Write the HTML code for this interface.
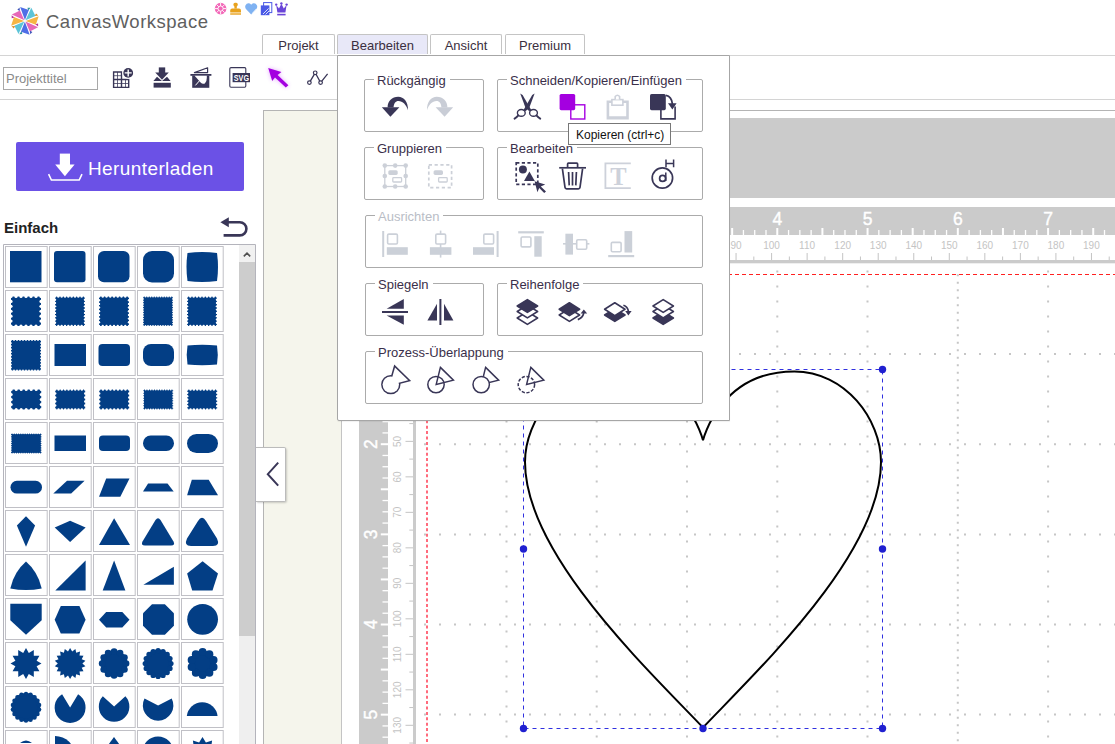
<!DOCTYPE html>
<html><head><meta charset="utf-8">
<style>
html,body{margin:0;padding:0;width:1115px;height:744px;overflow:hidden;background:#fff;font-family:"Liberation Sans",sans-serif;}
.a{position:absolute;}
.hl{position:absolute;height:1px;background:#d4d4d4;}
.tab{position:absolute;top:34px;height:20px;border:1px solid #c4c4c4;border-bottom:none;border-radius:2px 2px 0 0;background:#fff;font-size:13px;color:#3b2f40;text-align:center;line-height:22px;box-sizing:border-box;}
svg{position:absolute;overflow:visible;}
.grp{position:absolute;box-sizing:border-box;border:1px solid #ababab;border-radius:2px;}
.grp span{position:absolute;left:9px;top:-7px;padding:0 4px 0 3px;background:#fff;font-size:13px;line-height:16px;color:#3a2f4a;white-space:nowrap;}
</style></head><body>

<!-- header -->
<svg style="left:0;top:0" width="1115" height="110" viewBox="0 0 1115 110">
<!-- logo pinwheel -->
<g><polygon points="24.91,20.10 20.15,7.10 28.87,10.00" fill="#4f6ee6"/><polygon points="19.51,7.55 17.41,9.79 19.91,11.10" fill="#3a50b8"/><polygon points="25.48,20.34 31.30,7.78 35.41,16.00" fill="#5cc4d8"/><polygon points="30.53,7.64 27.46,7.75 28.30,10.44" fill="#2f95a0"/><polygon points="25.70,20.91 38.70,16.15 35.80,24.87" fill="#f6b544"/><polygon points="38.25,15.51 36.01,13.41 34.70,15.91" fill="#d88c22"/><polygon points="25.46,21.48 38.02,27.30 29.80,31.41" fill="#e667b8"/><polygon points="38.16,26.53 38.05,23.46 35.36,24.30" fill="#b8309c"/><polygon points="24.89,21.70 29.65,34.70 20.93,31.80" fill="#4f6ee6"/><polygon points="30.29,34.25 32.39,32.01 29.89,30.70" fill="#3a50b8"/><polygon points="24.32,21.46 18.50,34.02 14.39,25.80" fill="#5cc4d8"/><polygon points="19.27,34.16 22.34,34.05 21.50,31.36" fill="#2f95a0"/><polygon points="24.10,20.89 11.10,25.65 14.00,16.93" fill="#f6b544"/><polygon points="11.55,26.29 13.79,28.39 15.10,25.89" fill="#d88c22"/><polygon points="24.34,20.32 11.78,14.50 20.00,10.39" fill="#e667b8"/><polygon points="11.64,15.27 11.75,18.34 14.44,17.50" fill="#b8309c"/></g>
<!-- header badges -->
<g fill="#f268b8">
<circle cx="220.6" cy="8.6" r="5.8"/>
</g>
<g fill="none" stroke="#fff" stroke-width="0.9">
<circle cx="220.6" cy="8.6" r="2.6"/>
<path d="M220.6 2.8 V6 M220.6 11.2 V14.4 M214.8 8.6 H218 M223.2 8.6 H226.4 M216.5 4.5 L218.8 6.8 M222.4 10.4 L224.7 12.7 M224.7 4.5 L222.4 6.8 M218.8 10.4 L216.5 12.7"/>
</g>
<g fill="#e8a21d">
<rect x="233.4" y="2.8" width="4.4" height="3.6" rx="1.6"/>
<rect x="234.4" y="6" width="2.4" height="2.6"/>
<path d="M230.2 12.4 V10.4 Q230.2 8.4 232.2 8.4 H239 Q241 8.4 241 10.4 V12.4 Z"/>
<rect x="230.2" y="13.3" width="10.8" height="1.4"/>
</g>
<path d="M251.2 14.6 L246.4 9.6 Q244.6 7.6 245.4 5.4 Q246.6 2.9 249 3.2 Q250.4 3.5 251.2 4.8 Q252 3.5 253.4 3.2 Q255.8 2.9 257 5.4 Q257.8 7.6 256 9.6 Z" fill="#7fb2f2"/>
<path d="M252.2 13.4 L256.4 8.8" stroke="#fff" stroke-width="0.7"/>
<g>
<rect x="263.6" y="2.6" width="8.2" height="10" fill="none" stroke="#4a5ae6" stroke-width="1"/>
<rect x="260.8" y="5.4" width="8.6" height="9.8" fill="#4a5ae6"/>
<path d="M263 14 L268.6 8.4 M265.6 14.4 L269 11" stroke="#fff" stroke-width="0.8"/>
</g>
<g fill="#6a45d8">
<polygon points="276.2,5 279,8.6 281.4,3.8 283.8,8.6 286.6,5 285.4,12.6 277.4,12.6"/>
<circle cx="276.2" cy="4.6" r="1.2"/><circle cx="281.4" cy="3.4" r="1.2"/><circle cx="286.6" cy="4.6" r="1.2"/>
<rect x="277.2" y="13.8" width="8.4" height="1.6"/>
</g>
<!-- toolbar icons -->
<g fill="none" stroke="#393657">
<path d="M113.6 72 H121.5 V79.5 H128.7 V87.4 H113.6 Z M121.5 79.5 V87.4 M113.6 79.5 H121.5" stroke-width="1.4"/>
<path d="M117.5 72 V87.4 M125.5 79.5 V87.4 M113.6 75.7 H121.5 M113.6 83.5 H128.7" stroke-width="0.9" opacity="0.85"/>
</g>
<circle cx="128.2" cy="72.9" r="5.8" fill="#fff"/>
<circle cx="128.2" cy="72.9" r="4.9" fill="#393657"/>
<path d="M128.2 69.4 V76.4 M124.7 72.9 H131.7" stroke="#fff" stroke-width="1.4"/>
<g fill="#393657">
<rect x="158.8" y="67.4" width="6.4" height="5.6"/>
<polygon points="155.2,72.6 168.8,72.6 162,79.8"/>
<polygon points="153.4,81 157,76.8 162,81 167,76.8 170.6,81"/>
<rect x="153.6" y="82.8" width="17.2" height="4.8"/>
<rect x="190.4" y="74" width="21" height="1.8"/>
<rect x="192.2" y="75.6" width="17.1" height="12.2"/>
</g>
<path d="M194.6 75.8 L200.6 82.4 Q202.6 84.6 204.8 83.4 Q206.8 82 206.8 78 V75.8 Z" fill="#fff"/>
<path d="M195.4 85.4 L199.8 80.4" stroke="#fff" stroke-width="1"/>
<path d="M194.4 72.6 L207.6 67.8 V72.6 Z" fill="none" stroke="#393657" stroke-width="1.2" stroke-linejoin="round"/>
<rect x="229.8" y="67.6" width="16" height="19.6" rx="1.2" fill="none" stroke="#393657" stroke-width="1.1"/>
<rect x="232.6" y="73" width="17.4" height="9.2" fill="#393657"/>
<text x="233.8" y="80.9" font-family="Liberation Sans" font-weight="bold" font-size="8.4" textLength="15.2" lengthAdjust="spacingAndGlyphs" fill="#fff">SVG</text>
<defs><filter id="gl" x="-50%" y="-50%" width="200%" height="200%"><feGaussianBlur stdDeviation="2.2"/></filter></defs>
<g filter="url(#gl)" opacity="0.45"><polygon points="268.2,68 281.4,72 277.6,75 288.4,85.2 285.8,87.6 275,77.4 272.2,81" fill="#c040ff"/></g>
<polygon points="268.2,68 281.4,72 277.6,75 288.4,85.2 285.8,87.6 275,77.4 272.2,81" fill="#a400e0"/>
<path d="M309.4 82.6 L315.2 72.8 L320.6 82.6 L327.6 73.8" fill="none" stroke="#393657" stroke-width="1.3"/>
<g fill="#fff" stroke="#393657" stroke-width="1.2">
<circle cx="309.4" cy="82.6" r="1.8"/><circle cx="315.2" cy="72.8" r="1.8"/><circle cx="320.6" cy="82.6" r="1.8"/>
</g>
</svg>

<div class="a" id="logotxt" style="left:46px;top:10.5px;font-size:18.5px;letter-spacing:0.5px;color:#606060;white-space:nowrap;">CanvasWorkspace</div>

<div class="tab" style="left:262px;width:73px;">Projekt</div>
<div class="tab" style="left:337px;width:91px;background:#e8e8f8;">Bearbeiten</div>
<div class="tab" style="left:430px;width:72px;">Ansicht</div>
<div class="tab" style="left:505px;width:80px;">Premium</div>
<div class="hl" style="left:0;top:55px;width:1115px;"></div>

<!-- toolbar -->
<div class="a" style="left:3px;top:67px;width:95px;height:23px;border:1px solid #a8a8a8;box-sizing:border-box;font-size:13px;color:#8a8a8a;line-height:21px;padding-left:2px;">Projekttitel</div>
<div class="hl" style="left:0;top:99px;width:1115px;"></div>

<!-- left panel -->
<div class="a" style="left:16px;top:142px;width:228px;height:49px;background:#6b51e6;border-radius:2px;"></div>
<div class="a" style="left:88px;top:158px;font-size:19px;letter-spacing:0.4px;color:#fff;white-space:nowrap;">Herunterladen</div>
<div class="a" style="left:4px;top:219px;font-size:15px;font-weight:bold;color:#222;">Einfach</div>

<svg style="left:0;top:0" width="260" height="744" viewBox="0 0 260 744"><g fill="none" stroke="#c0c0c6" stroke-width="1"><rect x="5.5" y="246.5" width="41.7" height="41"/><rect x="49.5" y="246.5" width="41.7" height="41"/><rect x="93.5" y="246.5" width="41.7" height="41"/><rect x="137.5" y="246.5" width="41.7" height="41"/><rect x="181.5" y="246.5" width="41.7" height="41"/><rect x="5.5" y="290.5" width="41.7" height="41"/><rect x="49.5" y="290.5" width="41.7" height="41"/><rect x="93.5" y="290.5" width="41.7" height="41"/><rect x="137.5" y="290.5" width="41.7" height="41"/><rect x="181.5" y="290.5" width="41.7" height="41"/><rect x="5.5" y="334.5" width="41.7" height="41"/><rect x="49.5" y="334.5" width="41.7" height="41"/><rect x="93.5" y="334.5" width="41.7" height="41"/><rect x="137.5" y="334.5" width="41.7" height="41"/><rect x="181.5" y="334.5" width="41.7" height="41"/><rect x="5.5" y="378.5" width="41.7" height="41"/><rect x="49.5" y="378.5" width="41.7" height="41"/><rect x="93.5" y="378.5" width="41.7" height="41"/><rect x="137.5" y="378.5" width="41.7" height="41"/><rect x="181.5" y="378.5" width="41.7" height="41"/><rect x="5.5" y="422.5" width="41.7" height="41"/><rect x="49.5" y="422.5" width="41.7" height="41"/><rect x="93.5" y="422.5" width="41.7" height="41"/><rect x="137.5" y="422.5" width="41.7" height="41"/><rect x="181.5" y="422.5" width="41.7" height="41"/><rect x="5.5" y="466.5" width="41.7" height="41"/><rect x="49.5" y="466.5" width="41.7" height="41"/><rect x="93.5" y="466.5" width="41.7" height="41"/><rect x="137.5" y="466.5" width="41.7" height="41"/><rect x="181.5" y="466.5" width="41.7" height="41"/><rect x="5.5" y="510.5" width="41.7" height="41"/><rect x="49.5" y="510.5" width="41.7" height="41"/><rect x="93.5" y="510.5" width="41.7" height="41"/><rect x="137.5" y="510.5" width="41.7" height="41"/><rect x="181.5" y="510.5" width="41.7" height="41"/><rect x="5.5" y="554.5" width="41.7" height="41"/><rect x="49.5" y="554.5" width="41.7" height="41"/><rect x="93.5" y="554.5" width="41.7" height="41"/><rect x="137.5" y="554.5" width="41.7" height="41"/><rect x="181.5" y="554.5" width="41.7" height="41"/><rect x="5.5" y="598.5" width="41.7" height="41"/><rect x="49.5" y="598.5" width="41.7" height="41"/><rect x="93.5" y="598.5" width="41.7" height="41"/><rect x="137.5" y="598.5" width="41.7" height="41"/><rect x="181.5" y="598.5" width="41.7" height="41"/><rect x="5.5" y="642.5" width="41.7" height="41"/><rect x="49.5" y="642.5" width="41.7" height="41"/><rect x="93.5" y="642.5" width="41.7" height="41"/><rect x="137.5" y="642.5" width="41.7" height="41"/><rect x="181.5" y="642.5" width="41.7" height="41"/><rect x="5.5" y="686.5" width="41.7" height="41"/><rect x="49.5" y="686.5" width="41.7" height="41"/><rect x="93.5" y="686.5" width="41.7" height="41"/><rect x="137.5" y="686.5" width="41.7" height="41"/><rect x="181.5" y="686.5" width="41.7" height="41"/><rect x="5.5" y="730.5" width="41.7" height="41"/><rect x="49.5" y="730.5" width="41.7" height="41"/><rect x="93.5" y="730.5" width="41.7" height="41"/><rect x="137.5" y="730.5" width="41.7" height="41"/><rect x="181.5" y="730.5" width="41.7" height="41"/></g><g fill="#033e85"><rect x="10.0" y="251.0" width="31.5" height="31.3" rx="0.0"/><rect x="54.0" y="251.0" width="31.5" height="31.3" rx="3.0"/><rect x="98.0" y="251.0" width="31.5" height="31.3" rx="6.0"/><rect x="143.0" y="251.0" width="31.0" height="31.5" rx="9.0"/><path d="M187.5 253.0Q202.2 251.0 217.0 253.0Q219.0 267.0 217.0 281.0Q202.2 283.0 187.5 281.0Q185.5 267.0 187.5 253.0Z"/><rect x="11.0" y="296.5" width="30.0" height="29.5" rx="0.0"/><circle cx="11.00" cy="296.50" r="1.60" fill="#fff"/><circle cx="11.00" cy="326.00" r="1.60" fill="#fff"/><circle cx="16.00" cy="296.50" r="1.60" fill="#fff"/><circle cx="16.00" cy="326.00" r="1.60" fill="#fff"/><circle cx="21.00" cy="296.50" r="1.60" fill="#fff"/><circle cx="21.00" cy="326.00" r="1.60" fill="#fff"/><circle cx="26.00" cy="296.50" r="1.60" fill="#fff"/><circle cx="26.00" cy="326.00" r="1.60" fill="#fff"/><circle cx="31.00" cy="296.50" r="1.60" fill="#fff"/><circle cx="31.00" cy="326.00" r="1.60" fill="#fff"/><circle cx="36.00" cy="296.50" r="1.60" fill="#fff"/><circle cx="36.00" cy="326.00" r="1.60" fill="#fff"/><circle cx="41.00" cy="296.50" r="1.60" fill="#fff"/><circle cx="41.00" cy="326.00" r="1.60" fill="#fff"/><circle cx="11.00" cy="301.42" r="1.60" fill="#fff"/><circle cx="41.00" cy="301.42" r="1.60" fill="#fff"/><circle cx="11.00" cy="306.33" r="1.60" fill="#fff"/><circle cx="41.00" cy="306.33" r="1.60" fill="#fff"/><circle cx="11.00" cy="311.25" r="1.60" fill="#fff"/><circle cx="41.00" cy="311.25" r="1.60" fill="#fff"/><circle cx="11.00" cy="316.17" r="1.60" fill="#fff"/><circle cx="41.00" cy="316.17" r="1.60" fill="#fff"/><circle cx="11.00" cy="321.08" r="1.60" fill="#fff"/><circle cx="41.00" cy="321.08" r="1.60" fill="#fff"/><rect x="55.0" y="296.5" width="30.0" height="29.5" rx="0.0"/><circle cx="55.00" cy="296.50" r="1.20" fill="#fff"/><circle cx="55.00" cy="326.00" r="1.20" fill="#fff"/><circle cx="58.33" cy="296.50" r="1.20" fill="#fff"/><circle cx="58.33" cy="326.00" r="1.20" fill="#fff"/><circle cx="61.67" cy="296.50" r="1.20" fill="#fff"/><circle cx="61.67" cy="326.00" r="1.20" fill="#fff"/><circle cx="65.00" cy="296.50" r="1.20" fill="#fff"/><circle cx="65.00" cy="326.00" r="1.20" fill="#fff"/><circle cx="68.33" cy="296.50" r="1.20" fill="#fff"/><circle cx="68.33" cy="326.00" r="1.20" fill="#fff"/><circle cx="71.67" cy="296.50" r="1.20" fill="#fff"/><circle cx="71.67" cy="326.00" r="1.20" fill="#fff"/><circle cx="75.00" cy="296.50" r="1.20" fill="#fff"/><circle cx="75.00" cy="326.00" r="1.20" fill="#fff"/><circle cx="78.33" cy="296.50" r="1.20" fill="#fff"/><circle cx="78.33" cy="326.00" r="1.20" fill="#fff"/><circle cx="81.67" cy="296.50" r="1.20" fill="#fff"/><circle cx="81.67" cy="326.00" r="1.20" fill="#fff"/><circle cx="85.00" cy="296.50" r="1.20" fill="#fff"/><circle cx="85.00" cy="326.00" r="1.20" fill="#fff"/><circle cx="55.00" cy="299.78" r="1.20" fill="#fff"/><circle cx="85.00" cy="299.78" r="1.20" fill="#fff"/><circle cx="55.00" cy="303.06" r="1.20" fill="#fff"/><circle cx="85.00" cy="303.06" r="1.20" fill="#fff"/><circle cx="55.00" cy="306.33" r="1.20" fill="#fff"/><circle cx="85.00" cy="306.33" r="1.20" fill="#fff"/><circle cx="55.00" cy="309.61" r="1.20" fill="#fff"/><circle cx="85.00" cy="309.61" r="1.20" fill="#fff"/><circle cx="55.00" cy="312.89" r="1.20" fill="#fff"/><circle cx="85.00" cy="312.89" r="1.20" fill="#fff"/><circle cx="55.00" cy="316.17" r="1.20" fill="#fff"/><circle cx="85.00" cy="316.17" r="1.20" fill="#fff"/><circle cx="55.00" cy="319.44" r="1.20" fill="#fff"/><circle cx="85.00" cy="319.44" r="1.20" fill="#fff"/><circle cx="55.00" cy="322.72" r="1.20" fill="#fff"/><circle cx="85.00" cy="322.72" r="1.20" fill="#fff"/><rect x="99.0" y="296.5" width="30.0" height="29.5" rx="0.0"/><circle cx="99.00" cy="296.50" r="1.20" fill="#fff"/><circle cx="99.00" cy="326.00" r="1.20" fill="#fff"/><circle cx="102.75" cy="296.50" r="1.20" fill="#fff"/><circle cx="102.75" cy="326.00" r="1.20" fill="#fff"/><circle cx="106.50" cy="296.50" r="1.20" fill="#fff"/><circle cx="106.50" cy="326.00" r="1.20" fill="#fff"/><circle cx="110.25" cy="296.50" r="1.20" fill="#fff"/><circle cx="110.25" cy="326.00" r="1.20" fill="#fff"/><circle cx="114.00" cy="296.50" r="1.20" fill="#fff"/><circle cx="114.00" cy="326.00" r="1.20" fill="#fff"/><circle cx="117.75" cy="296.50" r="1.20" fill="#fff"/><circle cx="117.75" cy="326.00" r="1.20" fill="#fff"/><circle cx="121.50" cy="296.50" r="1.20" fill="#fff"/><circle cx="121.50" cy="326.00" r="1.20" fill="#fff"/><circle cx="125.25" cy="296.50" r="1.20" fill="#fff"/><circle cx="125.25" cy="326.00" r="1.20" fill="#fff"/><circle cx="129.00" cy="296.50" r="1.20" fill="#fff"/><circle cx="129.00" cy="326.00" r="1.20" fill="#fff"/><circle cx="99.00" cy="300.19" r="1.20" fill="#fff"/><circle cx="129.00" cy="300.19" r="1.20" fill="#fff"/><circle cx="99.00" cy="303.88" r="1.20" fill="#fff"/><circle cx="129.00" cy="303.88" r="1.20" fill="#fff"/><circle cx="99.00" cy="307.56" r="1.20" fill="#fff"/><circle cx="129.00" cy="307.56" r="1.20" fill="#fff"/><circle cx="99.00" cy="311.25" r="1.20" fill="#fff"/><circle cx="129.00" cy="311.25" r="1.20" fill="#fff"/><circle cx="99.00" cy="314.94" r="1.20" fill="#fff"/><circle cx="129.00" cy="314.94" r="1.20" fill="#fff"/><circle cx="99.00" cy="318.62" r="1.20" fill="#fff"/><circle cx="129.00" cy="318.62" r="1.20" fill="#fff"/><circle cx="99.00" cy="322.31" r="1.20" fill="#fff"/><circle cx="129.00" cy="322.31" r="1.20" fill="#fff"/><rect x="143.0" y="296.5" width="30.0" height="29.5" rx="0.0"/><circle cx="143.00" cy="296.50" r="0.90" fill="#fff"/><circle cx="143.00" cy="326.00" r="0.90" fill="#fff"/><circle cx="145.50" cy="296.50" r="0.90" fill="#fff"/><circle cx="145.50" cy="326.00" r="0.90" fill="#fff"/><circle cx="148.00" cy="296.50" r="0.90" fill="#fff"/><circle cx="148.00" cy="326.00" r="0.90" fill="#fff"/><circle cx="150.50" cy="296.50" r="0.90" fill="#fff"/><circle cx="150.50" cy="326.00" r="0.90" fill="#fff"/><circle cx="153.00" cy="296.50" r="0.90" fill="#fff"/><circle cx="153.00" cy="326.00" r="0.90" fill="#fff"/><circle cx="155.50" cy="296.50" r="0.90" fill="#fff"/><circle cx="155.50" cy="326.00" r="0.90" fill="#fff"/><circle cx="158.00" cy="296.50" r="0.90" fill="#fff"/><circle cx="158.00" cy="326.00" r="0.90" fill="#fff"/><circle cx="160.50" cy="296.50" r="0.90" fill="#fff"/><circle cx="160.50" cy="326.00" r="0.90" fill="#fff"/><circle cx="163.00" cy="296.50" r="0.90" fill="#fff"/><circle cx="163.00" cy="326.00" r="0.90" fill="#fff"/><circle cx="165.50" cy="296.50" r="0.90" fill="#fff"/><circle cx="165.50" cy="326.00" r="0.90" fill="#fff"/><circle cx="168.00" cy="296.50" r="0.90" fill="#fff"/><circle cx="168.00" cy="326.00" r="0.90" fill="#fff"/><circle cx="170.50" cy="296.50" r="0.90" fill="#fff"/><circle cx="170.50" cy="326.00" r="0.90" fill="#fff"/><circle cx="173.00" cy="296.50" r="0.90" fill="#fff"/><circle cx="173.00" cy="326.00" r="0.90" fill="#fff"/><circle cx="143.00" cy="298.96" r="0.90" fill="#fff"/><circle cx="173.00" cy="298.96" r="0.90" fill="#fff"/><circle cx="143.00" cy="301.42" r="0.90" fill="#fff"/><circle cx="173.00" cy="301.42" r="0.90" fill="#fff"/><circle cx="143.00" cy="303.88" r="0.90" fill="#fff"/><circle cx="173.00" cy="303.88" r="0.90" fill="#fff"/><circle cx="143.00" cy="306.33" r="0.90" fill="#fff"/><circle cx="173.00" cy="306.33" r="0.90" fill="#fff"/><circle cx="143.00" cy="308.79" r="0.90" fill="#fff"/><circle cx="173.00" cy="308.79" r="0.90" fill="#fff"/><circle cx="143.00" cy="311.25" r="0.90" fill="#fff"/><circle cx="173.00" cy="311.25" r="0.90" fill="#fff"/><circle cx="143.00" cy="313.71" r="0.90" fill="#fff"/><circle cx="173.00" cy="313.71" r="0.90" fill="#fff"/><circle cx="143.00" cy="316.17" r="0.90" fill="#fff"/><circle cx="173.00" cy="316.17" r="0.90" fill="#fff"/><circle cx="143.00" cy="318.62" r="0.90" fill="#fff"/><circle cx="173.00" cy="318.62" r="0.90" fill="#fff"/><circle cx="143.00" cy="321.08" r="0.90" fill="#fff"/><circle cx="173.00" cy="321.08" r="0.90" fill="#fff"/><circle cx="143.00" cy="323.54" r="0.90" fill="#fff"/><circle cx="173.00" cy="323.54" r="0.90" fill="#fff"/><rect x="187.0" y="296.5" width="30.0" height="29.5" rx="0.0"/><circle cx="187.00" cy="296.50" r="1.20" fill="#fff"/><circle cx="187.00" cy="326.00" r="1.20" fill="#fff"/><circle cx="190.33" cy="296.50" r="1.20" fill="#fff"/><circle cx="190.33" cy="326.00" r="1.20" fill="#fff"/><circle cx="193.67" cy="296.50" r="1.20" fill="#fff"/><circle cx="193.67" cy="326.00" r="1.20" fill="#fff"/><circle cx="197.00" cy="296.50" r="1.20" fill="#fff"/><circle cx="197.00" cy="326.00" r="1.20" fill="#fff"/><circle cx="200.33" cy="296.50" r="1.20" fill="#fff"/><circle cx="200.33" cy="326.00" r="1.20" fill="#fff"/><circle cx="203.67" cy="296.50" r="1.20" fill="#fff"/><circle cx="203.67" cy="326.00" r="1.20" fill="#fff"/><circle cx="207.00" cy="296.50" r="1.20" fill="#fff"/><circle cx="207.00" cy="326.00" r="1.20" fill="#fff"/><circle cx="210.33" cy="296.50" r="1.20" fill="#fff"/><circle cx="210.33" cy="326.00" r="1.20" fill="#fff"/><circle cx="213.67" cy="296.50" r="1.20" fill="#fff"/><circle cx="213.67" cy="326.00" r="1.20" fill="#fff"/><circle cx="217.00" cy="296.50" r="1.20" fill="#fff"/><circle cx="217.00" cy="326.00" r="1.20" fill="#fff"/><circle cx="187.00" cy="299.78" r="1.20" fill="#fff"/><circle cx="217.00" cy="299.78" r="1.20" fill="#fff"/><circle cx="187.00" cy="303.06" r="1.20" fill="#fff"/><circle cx="217.00" cy="303.06" r="1.20" fill="#fff"/><circle cx="187.00" cy="306.33" r="1.20" fill="#fff"/><circle cx="217.00" cy="306.33" r="1.20" fill="#fff"/><circle cx="187.00" cy="309.61" r="1.20" fill="#fff"/><circle cx="217.00" cy="309.61" r="1.20" fill="#fff"/><circle cx="187.00" cy="312.89" r="1.20" fill="#fff"/><circle cx="217.00" cy="312.89" r="1.20" fill="#fff"/><circle cx="187.00" cy="316.17" r="1.20" fill="#fff"/><circle cx="217.00" cy="316.17" r="1.20" fill="#fff"/><circle cx="187.00" cy="319.44" r="1.20" fill="#fff"/><circle cx="217.00" cy="319.44" r="1.20" fill="#fff"/><circle cx="187.00" cy="322.72" r="1.20" fill="#fff"/><circle cx="217.00" cy="322.72" r="1.20" fill="#fff"/><rect x="11.0" y="340.0" width="30.0" height="30.5" rx="0.0"/><circle cx="11.00" cy="340.00" r="0.90" fill="#fff"/><circle cx="11.00" cy="370.50" r="0.90" fill="#fff"/><circle cx="14.00" cy="340.00" r="0.90" fill="#fff"/><circle cx="14.00" cy="370.50" r="0.90" fill="#fff"/><circle cx="17.00" cy="340.00" r="0.90" fill="#fff"/><circle cx="17.00" cy="370.50" r="0.90" fill="#fff"/><circle cx="20.00" cy="340.00" r="0.90" fill="#fff"/><circle cx="20.00" cy="370.50" r="0.90" fill="#fff"/><circle cx="23.00" cy="340.00" r="0.90" fill="#fff"/><circle cx="23.00" cy="370.50" r="0.90" fill="#fff"/><circle cx="26.00" cy="340.00" r="0.90" fill="#fff"/><circle cx="26.00" cy="370.50" r="0.90" fill="#fff"/><circle cx="29.00" cy="340.00" r="0.90" fill="#fff"/><circle cx="29.00" cy="370.50" r="0.90" fill="#fff"/><circle cx="32.00" cy="340.00" r="0.90" fill="#fff"/><circle cx="32.00" cy="370.50" r="0.90" fill="#fff"/><circle cx="35.00" cy="340.00" r="0.90" fill="#fff"/><circle cx="35.00" cy="370.50" r="0.90" fill="#fff"/><circle cx="38.00" cy="340.00" r="0.90" fill="#fff"/><circle cx="38.00" cy="370.50" r="0.90" fill="#fff"/><circle cx="41.00" cy="340.00" r="0.90" fill="#fff"/><circle cx="41.00" cy="370.50" r="0.90" fill="#fff"/><circle cx="11.00" cy="343.05" r="0.90" fill="#fff"/><circle cx="41.00" cy="343.05" r="0.90" fill="#fff"/><circle cx="11.00" cy="346.10" r="0.90" fill="#fff"/><circle cx="41.00" cy="346.10" r="0.90" fill="#fff"/><circle cx="11.00" cy="349.15" r="0.90" fill="#fff"/><circle cx="41.00" cy="349.15" r="0.90" fill="#fff"/><circle cx="11.00" cy="352.20" r="0.90" fill="#fff"/><circle cx="41.00" cy="352.20" r="0.90" fill="#fff"/><circle cx="11.00" cy="355.25" r="0.90" fill="#fff"/><circle cx="41.00" cy="355.25" r="0.90" fill="#fff"/><circle cx="11.00" cy="358.30" r="0.90" fill="#fff"/><circle cx="41.00" cy="358.30" r="0.90" fill="#fff"/><circle cx="11.00" cy="361.35" r="0.90" fill="#fff"/><circle cx="41.00" cy="361.35" r="0.90" fill="#fff"/><circle cx="11.00" cy="364.40" r="0.90" fill="#fff"/><circle cx="41.00" cy="364.40" r="0.90" fill="#fff"/><circle cx="11.00" cy="367.45" r="0.90" fill="#fff"/><circle cx="41.00" cy="367.45" r="0.90" fill="#fff"/><rect x="54.5" y="344.0" width="31.5" height="22.0" rx="0.0"/><rect x="98.5" y="344.0" width="31.5" height="22.0" rx="4.0"/><rect x="143.0" y="344.0" width="31.0" height="22.0" rx="8.0"/><path d="M187.5 345.5Q202.2 343.9 217.0 345.5Q218.6 355.0 217.0 364.5Q202.2 366.1 187.5 364.5Q185.9 355.0 187.5 345.5Z"/><rect x="11.2" y="389.5" width="30.0" height="20.0" rx="0.0"/><circle cx="11.20" cy="389.50" r="1.50" fill="#fff"/><circle cx="11.20" cy="409.50" r="1.50" fill="#fff"/><circle cx="16.20" cy="389.50" r="1.50" fill="#fff"/><circle cx="16.20" cy="409.50" r="1.50" fill="#fff"/><circle cx="21.20" cy="389.50" r="1.50" fill="#fff"/><circle cx="21.20" cy="409.50" r="1.50" fill="#fff"/><circle cx="26.20" cy="389.50" r="1.50" fill="#fff"/><circle cx="26.20" cy="409.50" r="1.50" fill="#fff"/><circle cx="31.20" cy="389.50" r="1.50" fill="#fff"/><circle cx="31.20" cy="409.50" r="1.50" fill="#fff"/><circle cx="36.20" cy="389.50" r="1.50" fill="#fff"/><circle cx="36.20" cy="409.50" r="1.50" fill="#fff"/><circle cx="41.20" cy="389.50" r="1.50" fill="#fff"/><circle cx="41.20" cy="409.50" r="1.50" fill="#fff"/><circle cx="11.20" cy="394.50" r="1.50" fill="#fff"/><circle cx="41.20" cy="394.50" r="1.50" fill="#fff"/><circle cx="11.20" cy="399.50" r="1.50" fill="#fff"/><circle cx="41.20" cy="399.50" r="1.50" fill="#fff"/><circle cx="11.20" cy="404.50" r="1.50" fill="#fff"/><circle cx="41.20" cy="404.50" r="1.50" fill="#fff"/><rect x="55.2" y="389.5" width="30.0" height="20.0" rx="0.0"/><circle cx="55.20" cy="389.50" r="1.20" fill="#fff"/><circle cx="55.20" cy="409.50" r="1.20" fill="#fff"/><circle cx="58.53" cy="389.50" r="1.20" fill="#fff"/><circle cx="58.53" cy="409.50" r="1.20" fill="#fff"/><circle cx="61.87" cy="389.50" r="1.20" fill="#fff"/><circle cx="61.87" cy="409.50" r="1.20" fill="#fff"/><circle cx="65.20" cy="389.50" r="1.20" fill="#fff"/><circle cx="65.20" cy="409.50" r="1.20" fill="#fff"/><circle cx="68.53" cy="389.50" r="1.20" fill="#fff"/><circle cx="68.53" cy="409.50" r="1.20" fill="#fff"/><circle cx="71.87" cy="389.50" r="1.20" fill="#fff"/><circle cx="71.87" cy="409.50" r="1.20" fill="#fff"/><circle cx="75.20" cy="389.50" r="1.20" fill="#fff"/><circle cx="75.20" cy="409.50" r="1.20" fill="#fff"/><circle cx="78.53" cy="389.50" r="1.20" fill="#fff"/><circle cx="78.53" cy="409.50" r="1.20" fill="#fff"/><circle cx="81.87" cy="389.50" r="1.20" fill="#fff"/><circle cx="81.87" cy="409.50" r="1.20" fill="#fff"/><circle cx="85.20" cy="389.50" r="1.20" fill="#fff"/><circle cx="85.20" cy="409.50" r="1.20" fill="#fff"/><circle cx="55.20" cy="393.50" r="1.20" fill="#fff"/><circle cx="85.20" cy="393.50" r="1.20" fill="#fff"/><circle cx="55.20" cy="397.50" r="1.20" fill="#fff"/><circle cx="85.20" cy="397.50" r="1.20" fill="#fff"/><circle cx="55.20" cy="401.50" r="1.20" fill="#fff"/><circle cx="85.20" cy="401.50" r="1.20" fill="#fff"/><circle cx="55.20" cy="405.50" r="1.20" fill="#fff"/><circle cx="85.20" cy="405.50" r="1.20" fill="#fff"/><rect x="99.2" y="389.5" width="30.0" height="20.0" rx="0.0"/><circle cx="99.20" cy="389.50" r="1.20" fill="#fff"/><circle cx="99.20" cy="409.50" r="1.20" fill="#fff"/><circle cx="102.95" cy="389.50" r="1.20" fill="#fff"/><circle cx="102.95" cy="409.50" r="1.20" fill="#fff"/><circle cx="106.70" cy="389.50" r="1.20" fill="#fff"/><circle cx="106.70" cy="409.50" r="1.20" fill="#fff"/><circle cx="110.45" cy="389.50" r="1.20" fill="#fff"/><circle cx="110.45" cy="409.50" r="1.20" fill="#fff"/><circle cx="114.20" cy="389.50" r="1.20" fill="#fff"/><circle cx="114.20" cy="409.50" r="1.20" fill="#fff"/><circle cx="117.95" cy="389.50" r="1.20" fill="#fff"/><circle cx="117.95" cy="409.50" r="1.20" fill="#fff"/><circle cx="121.70" cy="389.50" r="1.20" fill="#fff"/><circle cx="121.70" cy="409.50" r="1.20" fill="#fff"/><circle cx="125.45" cy="389.50" r="1.20" fill="#fff"/><circle cx="125.45" cy="409.50" r="1.20" fill="#fff"/><circle cx="129.20" cy="389.50" r="1.20" fill="#fff"/><circle cx="129.20" cy="409.50" r="1.20" fill="#fff"/><circle cx="99.20" cy="393.50" r="1.20" fill="#fff"/><circle cx="129.20" cy="393.50" r="1.20" fill="#fff"/><circle cx="99.20" cy="397.50" r="1.20" fill="#fff"/><circle cx="129.20" cy="397.50" r="1.20" fill="#fff"/><circle cx="99.20" cy="401.50" r="1.20" fill="#fff"/><circle cx="129.20" cy="401.50" r="1.20" fill="#fff"/><circle cx="99.20" cy="405.50" r="1.20" fill="#fff"/><circle cx="129.20" cy="405.50" r="1.20" fill="#fff"/><rect x="143.2" y="389.5" width="30.0" height="20.0" rx="0.0"/><circle cx="143.20" cy="389.50" r="0.90" fill="#fff"/><circle cx="143.20" cy="409.50" r="0.90" fill="#fff"/><circle cx="145.70" cy="389.50" r="0.90" fill="#fff"/><circle cx="145.70" cy="409.50" r="0.90" fill="#fff"/><circle cx="148.20" cy="389.50" r="0.90" fill="#fff"/><circle cx="148.20" cy="409.50" r="0.90" fill="#fff"/><circle cx="150.70" cy="389.50" r="0.90" fill="#fff"/><circle cx="150.70" cy="409.50" r="0.90" fill="#fff"/><circle cx="153.20" cy="389.50" r="0.90" fill="#fff"/><circle cx="153.20" cy="409.50" r="0.90" fill="#fff"/><circle cx="155.70" cy="389.50" r="0.90" fill="#fff"/><circle cx="155.70" cy="409.50" r="0.90" fill="#fff"/><circle cx="158.20" cy="389.50" r="0.90" fill="#fff"/><circle cx="158.20" cy="409.50" r="0.90" fill="#fff"/><circle cx="160.70" cy="389.50" r="0.90" fill="#fff"/><circle cx="160.70" cy="409.50" r="0.90" fill="#fff"/><circle cx="163.20" cy="389.50" r="0.90" fill="#fff"/><circle cx="163.20" cy="409.50" r="0.90" fill="#fff"/><circle cx="165.70" cy="389.50" r="0.90" fill="#fff"/><circle cx="165.70" cy="409.50" r="0.90" fill="#fff"/><circle cx="168.20" cy="389.50" r="0.90" fill="#fff"/><circle cx="168.20" cy="409.50" r="0.90" fill="#fff"/><circle cx="170.70" cy="389.50" r="0.90" fill="#fff"/><circle cx="170.70" cy="409.50" r="0.90" fill="#fff"/><circle cx="173.20" cy="389.50" r="0.90" fill="#fff"/><circle cx="173.20" cy="409.50" r="0.90" fill="#fff"/><circle cx="143.20" cy="392.00" r="0.90" fill="#fff"/><circle cx="173.20" cy="392.00" r="0.90" fill="#fff"/><circle cx="143.20" cy="394.50" r="0.90" fill="#fff"/><circle cx="173.20" cy="394.50" r="0.90" fill="#fff"/><circle cx="143.20" cy="397.00" r="0.90" fill="#fff"/><circle cx="173.20" cy="397.00" r="0.90" fill="#fff"/><circle cx="143.20" cy="399.50" r="0.90" fill="#fff"/><circle cx="173.20" cy="399.50" r="0.90" fill="#fff"/><circle cx="143.20" cy="402.00" r="0.90" fill="#fff"/><circle cx="173.20" cy="402.00" r="0.90" fill="#fff"/><circle cx="143.20" cy="404.50" r="0.90" fill="#fff"/><circle cx="173.20" cy="404.50" r="0.90" fill="#fff"/><circle cx="143.20" cy="407.00" r="0.90" fill="#fff"/><circle cx="173.20" cy="407.00" r="0.90" fill="#fff"/><rect x="187.2" y="389.5" width="30.0" height="20.0" rx="0.0"/><circle cx="187.20" cy="389.50" r="1.20" fill="#fff"/><circle cx="187.20" cy="409.50" r="1.20" fill="#fff"/><circle cx="190.53" cy="389.50" r="1.20" fill="#fff"/><circle cx="190.53" cy="409.50" r="1.20" fill="#fff"/><circle cx="193.87" cy="389.50" r="1.20" fill="#fff"/><circle cx="193.87" cy="409.50" r="1.20" fill="#fff"/><circle cx="197.20" cy="389.50" r="1.20" fill="#fff"/><circle cx="197.20" cy="409.50" r="1.20" fill="#fff"/><circle cx="200.53" cy="389.50" r="1.20" fill="#fff"/><circle cx="200.53" cy="409.50" r="1.20" fill="#fff"/><circle cx="203.87" cy="389.50" r="1.20" fill="#fff"/><circle cx="203.87" cy="409.50" r="1.20" fill="#fff"/><circle cx="207.20" cy="389.50" r="1.20" fill="#fff"/><circle cx="207.20" cy="409.50" r="1.20" fill="#fff"/><circle cx="210.53" cy="389.50" r="1.20" fill="#fff"/><circle cx="210.53" cy="409.50" r="1.20" fill="#fff"/><circle cx="213.87" cy="389.50" r="1.20" fill="#fff"/><circle cx="213.87" cy="409.50" r="1.20" fill="#fff"/><circle cx="217.20" cy="389.50" r="1.20" fill="#fff"/><circle cx="217.20" cy="409.50" r="1.20" fill="#fff"/><circle cx="187.20" cy="392.83" r="1.20" fill="#fff"/><circle cx="217.20" cy="392.83" r="1.20" fill="#fff"/><circle cx="187.20" cy="396.17" r="1.20" fill="#fff"/><circle cx="217.20" cy="396.17" r="1.20" fill="#fff"/><circle cx="187.20" cy="399.50" r="1.20" fill="#fff"/><circle cx="217.20" cy="399.50" r="1.20" fill="#fff"/><circle cx="187.20" cy="402.83" r="1.20" fill="#fff"/><circle cx="217.20" cy="402.83" r="1.20" fill="#fff"/><circle cx="187.20" cy="406.17" r="1.20" fill="#fff"/><circle cx="217.20" cy="406.17" r="1.20" fill="#fff"/><rect x="11.0" y="433.5" width="30.5" height="20.0" rx="0.0"/><circle cx="11.00" cy="433.50" r="0.80" fill="#fff"/><circle cx="11.00" cy="453.50" r="0.80" fill="#fff"/><circle cx="13.18" cy="433.50" r="0.80" fill="#fff"/><circle cx="13.18" cy="453.50" r="0.80" fill="#fff"/><circle cx="15.36" cy="433.50" r="0.80" fill="#fff"/><circle cx="15.36" cy="453.50" r="0.80" fill="#fff"/><circle cx="17.54" cy="433.50" r="0.80" fill="#fff"/><circle cx="17.54" cy="453.50" r="0.80" fill="#fff"/><circle cx="19.71" cy="433.50" r="0.80" fill="#fff"/><circle cx="19.71" cy="453.50" r="0.80" fill="#fff"/><circle cx="21.89" cy="433.50" r="0.80" fill="#fff"/><circle cx="21.89" cy="453.50" r="0.80" fill="#fff"/><circle cx="24.07" cy="433.50" r="0.80" fill="#fff"/><circle cx="24.07" cy="453.50" r="0.80" fill="#fff"/><circle cx="26.25" cy="433.50" r="0.80" fill="#fff"/><circle cx="26.25" cy="453.50" r="0.80" fill="#fff"/><circle cx="28.43" cy="433.50" r="0.80" fill="#fff"/><circle cx="28.43" cy="453.50" r="0.80" fill="#fff"/><circle cx="30.61" cy="433.50" r="0.80" fill="#fff"/><circle cx="30.61" cy="453.50" r="0.80" fill="#fff"/><circle cx="32.79" cy="433.50" r="0.80" fill="#fff"/><circle cx="32.79" cy="453.50" r="0.80" fill="#fff"/><circle cx="34.96" cy="433.50" r="0.80" fill="#fff"/><circle cx="34.96" cy="453.50" r="0.80" fill="#fff"/><circle cx="37.14" cy="433.50" r="0.80" fill="#fff"/><circle cx="37.14" cy="453.50" r="0.80" fill="#fff"/><circle cx="39.32" cy="433.50" r="0.80" fill="#fff"/><circle cx="39.32" cy="453.50" r="0.80" fill="#fff"/><circle cx="41.50" cy="433.50" r="0.80" fill="#fff"/><circle cx="41.50" cy="453.50" r="0.80" fill="#fff"/><circle cx="11.00" cy="435.72" r="0.80" fill="#fff"/><circle cx="41.50" cy="435.72" r="0.80" fill="#fff"/><circle cx="11.00" cy="437.94" r="0.80" fill="#fff"/><circle cx="41.50" cy="437.94" r="0.80" fill="#fff"/><circle cx="11.00" cy="440.17" r="0.80" fill="#fff"/><circle cx="41.50" cy="440.17" r="0.80" fill="#fff"/><circle cx="11.00" cy="442.39" r="0.80" fill="#fff"/><circle cx="41.50" cy="442.39" r="0.80" fill="#fff"/><circle cx="11.00" cy="444.61" r="0.80" fill="#fff"/><circle cx="41.50" cy="444.61" r="0.80" fill="#fff"/><circle cx="11.00" cy="446.83" r="0.80" fill="#fff"/><circle cx="41.50" cy="446.83" r="0.80" fill="#fff"/><circle cx="11.00" cy="449.06" r="0.80" fill="#fff"/><circle cx="41.50" cy="449.06" r="0.80" fill="#fff"/><circle cx="11.00" cy="451.28" r="0.80" fill="#fff"/><circle cx="41.50" cy="451.28" r="0.80" fill="#fff"/><rect x="54.5" y="435.5" width="31.5" height="15.5" rx="0.0"/><rect x="99.0" y="435.5" width="31.0" height="15.5" rx="4.0"/><rect x="143.0" y="435.5" width="31.0" height="15.5" rx="7.7"/><rect x="187.0" y="434.0" width="31.0" height="19.0" rx="9.5"/><rect x="10.5" y="480.8" width="31.5" height="12.8" rx="6.4"/><polygon points="53.3,493.6 71.2,493.6 84.6,480.8 67.0,480.8"/><polygon points="99.0,496.7 120.3,496.7 129.5,478.4 106.2,478.4"/><polygon points="143.0,491.6 173.7,491.6 167.5,483.5 148.1,483.5"/><polygon points="187.1,495.3 218.0,495.3 208.7,479.8 191.8,479.8"/><polygon points="26.0,516.3 35.1,525.5 26.0,546.8 16.9,525.5"/><polygon points="54.7,527.6 70.1,520.8 85.6,527.6 70.1,542.0"/><polygon points="114.1,518.3 130.0,545.1 99.0,545.1"/><path d="M155.5 520.0 Q158.0 516.5 160.5 520.0 L173.5 541.5 Q175.5 545.5 171.0 545.5 L145.0 545.5 Q140.5 545.5 142.5 541.5 Z"/><path d="M198.0 521.0 Q202.0 514.5 206.0 521.0 L217.0 538.5 Q220.5 546.0 213.0 546.0 L191.0 546.0 Q183.5 546.0 187.0 538.5 Z"/><path d="M26.0 561.6 Q38.0 572.0 41.7 588.4 Q26.0 591.5 10.3 588.4 Q14.0 572.0 26.0 561.6 Z"/><polygon points="55.3,590.5 85.6,590.5 85.6,560.6"/><polygon points="114.1,560.6 125.4,590.5 102.7,590.5"/><polygon points="143.4,584.7 173.9,566.8 173.9,584.7"/><polygon points="202.6,561.2 218.0,573.6 212.5,590.5 192.2,590.5 187.1,573.6"/><polygon points="10.3,603.8 41.7,603.8 41.7,620.3 26.0,634.8 10.3,620.3"/><polygon points="54.7,619.7 60.8,605.9 79.4,605.9 85.6,619.7 79.4,633.5 60.8,633.5"/><polygon points="99.0,619.7 106.2,612.1 122.3,612.1 129.5,619.7 122.3,627.4 106.2,627.4"/><polygon points="152.0,604.3 164.9,604.3 173.9,613.3 173.9,625.8 164.9,634.8 152.0,634.8 143.0,625.8 143.0,613.3"/><circle cx="202.6" cy="619.3" r="15.4"/><polygon points="26.0,648.0 28.8,652.9 33.8,650.1 33.8,655.7 39.4,655.8 36.6,660.7 41.5,663.5 36.6,666.3 39.4,671.2 33.8,671.3 33.8,676.9 28.8,674.1 26.0,679.0 23.2,674.1 18.3,676.9 18.2,671.3 12.6,671.2 15.4,666.3 10.5,663.5 15.4,660.7 12.6,655.8 18.2,655.7 18.2,650.1 23.2,652.9"/><polygon points="70.1,648.0 72.2,651.4 75.4,648.9 76.2,652.8 80.1,651.6 79.5,655.6 83.5,655.8 81.7,659.3 85.4,660.8 82.4,663.5 85.4,666.2 81.7,667.7 83.5,671.2 79.5,671.4 80.1,675.4 76.2,674.2 75.4,678.1 72.2,675.6 70.1,679.0 68.0,675.6 64.8,678.1 63.9,674.2 60.1,675.4 60.7,671.4 56.7,671.2 58.5,667.7 54.8,666.2 57.8,663.5 54.8,660.8 58.5,659.3 56.7,655.8 60.7,655.6 60.1,651.6 63.9,652.8 64.8,648.9 68.0,651.4"/><circle cx="114.1" cy="663.5" r="13.3"/><circle cx="114.10" cy="651.50" r="3.30"/><circle cx="120.10" cy="653.11" r="3.30"/><circle cx="124.49" cy="657.50" r="3.30"/><circle cx="126.10" cy="663.50" r="3.30"/><circle cx="124.49" cy="669.50" r="3.30"/><circle cx="120.10" cy="673.89" r="3.30"/><circle cx="114.10" cy="675.50" r="3.30"/><circle cx="108.10" cy="673.89" r="3.30"/><circle cx="103.71" cy="669.50" r="3.30"/><circle cx="102.10" cy="663.50" r="3.30"/><circle cx="103.71" cy="657.50" r="3.30"/><circle cx="108.10" cy="653.11" r="3.30"/><circle cx="158.1" cy="663.5" r="13.9"/><circle cx="158.10" cy="650.60" r="2.60"/><circle cx="163.04" cy="651.58" r="2.60"/><circle cx="167.22" cy="654.38" r="2.60"/><circle cx="170.02" cy="658.56" r="2.60"/><circle cx="171.00" cy="663.50" r="2.60"/><circle cx="170.02" cy="668.44" r="2.60"/><circle cx="167.22" cy="672.62" r="2.60"/><circle cx="163.04" cy="675.42" r="2.60"/><circle cx="158.10" cy="676.40" r="2.60"/><circle cx="153.16" cy="675.42" r="2.60"/><circle cx="148.98" cy="672.62" r="2.60"/><circle cx="146.18" cy="668.44" r="2.60"/><circle cx="145.20" cy="663.50" r="2.60"/><circle cx="146.18" cy="658.56" r="2.60"/><circle cx="148.98" cy="654.38" r="2.60"/><circle cx="153.16" cy="651.58" r="2.60"/><circle cx="202.6" cy="663.5" r="13.1"/><circle cx="202.60" cy="652.00" r="4.00"/><circle cx="209.36" cy="654.20" r="4.00"/><circle cx="213.54" cy="659.95" r="4.00"/><circle cx="213.54" cy="667.05" r="4.00"/><circle cx="209.36" cy="672.80" r="4.00"/><circle cx="202.60" cy="675.00" r="4.00"/><circle cx="195.84" cy="672.80" r="4.00"/><circle cx="191.66" cy="667.05" r="4.00"/><circle cx="191.66" cy="659.95" r="4.00"/><circle cx="195.84" cy="654.20" r="4.00"/><circle cx="26.0" cy="707.3" r="14.2"/><circle cx="26.00" cy="694.00" r="2.20"/><circle cx="30.55" cy="694.80" r="2.20"/><circle cx="34.55" cy="697.11" r="2.20"/><circle cx="37.52" cy="700.65" r="2.20"/><circle cx="39.10" cy="704.99" r="2.20"/><circle cx="39.10" cy="709.61" r="2.20"/><circle cx="37.52" cy="713.95" r="2.20"/><circle cx="34.55" cy="717.49" r="2.20"/><circle cx="30.55" cy="719.80" r="2.20"/><circle cx="26.00" cy="720.60" r="2.20"/><circle cx="21.45" cy="719.80" r="2.20"/><circle cx="17.45" cy="717.49" r="2.20"/><circle cx="14.48" cy="713.95" r="2.20"/><circle cx="12.90" cy="709.61" r="2.20"/><circle cx="12.90" cy="704.99" r="2.20"/><circle cx="14.48" cy="700.65" r="2.20"/><circle cx="17.45" cy="697.11" r="2.20"/><circle cx="21.45" cy="694.80" r="2.20"/><path d="M70.1 707.5L78.1 694.2A15.5 15.5 0 1 1 62.1 694.2Z"/><path d="M114.1 706.5L125.4 696.2A15.3 15.3 0 1 1 102.8 696.2Z"/><path d="M158.1 705.5L171.7 698.4A15.3 15.3 0 1 1 144.5 698.4Z"/><path d="M186.8 716.0A15.5 15.5 0 0 1 217.6 716.0Z"/><path d="M20.0 743.0Q26.0 738.0 32.0 743.0Z"/><path d="M55.0 756.0L55.0 736.0A20 20 0 0 1 75.0 756.0Z"/><polygon points="114.0,737.0 125.0,752.0 103.0,752.0"/><circle cx="158.0" cy="752.0" r="15.5"/><polygon points="202.5,737.0 205.9,742.6 212.1,740.5 211.2,747.0 217.3,749.4 212.3,753.7 215.5,759.5 208.9,759.7 207.6,766.1 202.5,762.0 197.4,766.1 196.1,759.7 189.5,759.5 192.7,753.7 187.7,749.4 193.8,747.0 192.9,740.5 199.1,742.6"/></g></svg>
<!-- canvas container -->
<div class="a" style="left:263px;top:110px;width:852px;height:634px;border-left:1px solid #b4b4b4;border-top:1px solid #b4b4b4;box-sizing:border-box;background:#fff;"></div>
<div class="a" style="left:264px;top:111px;width:77px;height:633px;background:#f5f5ec;border-right:1px solid #c4c4c4;"></div>
<svg style="left:0;top:0" width="1115" height="744" viewBox="0 0 1115 744"><rect x="342" y="111" width="773" height="633" fill="#fff"/><rect x="359" y="118" width="756" height="80" fill="#cbcbcb"/><rect x="359" y="207" width="756" height="28" fill="#cbcbcb"/><rect x="359" y="207" width="29" height="537" fill="#cbcbcb"/><rect x="413" y="260" width="702" height="3.3" fill="#cbcbcb"/><rect x="413" y="260" width="3" height="484" fill="#cbcbcb"/><g fill="#fff"><rect x="392.98" y="230.0" width="1.3" height="5.2"/><rect x="404.27" y="230.0" width="1.3" height="5.2"/><rect x="415.20" y="228.0" width="2.0" height="7.2"/><rect x="426.83" y="230.0" width="1.3" height="5.2"/><rect x="438.12" y="230.0" width="1.3" height="5.2"/><rect x="449.40" y="230.0" width="1.3" height="5.2"/><rect x="460.33" y="228.0" width="2.0" height="7.2"/><rect x="471.97" y="230.0" width="1.3" height="5.2"/><rect x="483.25" y="230.0" width="1.3" height="5.2"/><rect x="494.54" y="230.0" width="1.3" height="5.2"/><rect x="505.47" y="228.0" width="2.0" height="7.2"/><rect x="517.10" y="230.0" width="1.3" height="5.2"/><rect x="528.39" y="230.0" width="1.3" height="5.2"/><rect x="539.67" y="230.0" width="1.3" height="5.2"/><rect x="550.61" y="228.0" width="2.0" height="7.2"/><rect x="562.24" y="230.0" width="1.3" height="5.2"/><rect x="573.52" y="230.0" width="1.3" height="5.2"/><rect x="584.81" y="230.0" width="1.3" height="5.2"/><rect x="595.74" y="228.0" width="2.0" height="7.2"/><rect x="607.37" y="230.0" width="1.3" height="5.2"/><rect x="618.66" y="230.0" width="1.3" height="5.2"/><rect x="629.94" y="230.0" width="1.3" height="5.2"/><rect x="640.88" y="228.0" width="2.0" height="7.2"/><rect x="652.51" y="230.0" width="1.3" height="5.2"/><rect x="663.79" y="230.0" width="1.3" height="5.2"/><rect x="675.08" y="230.0" width="1.3" height="5.2"/><rect x="686.01" y="228.0" width="2.0" height="7.2"/><rect x="697.64" y="230.0" width="1.3" height="5.2"/><rect x="708.93" y="230.0" width="1.3" height="5.2"/><rect x="720.21" y="230.0" width="1.3" height="5.2"/><rect x="731.14" y="228.0" width="2.0" height="7.2"/><rect x="742.78" y="230.0" width="1.3" height="5.2"/><rect x="754.06" y="230.0" width="1.3" height="5.2"/><rect x="765.35" y="230.0" width="1.3" height="5.2"/><rect x="776.28" y="228.0" width="2.0" height="7.2"/><rect x="787.91" y="230.0" width="1.3" height="5.2"/><rect x="799.20" y="230.0" width="1.3" height="5.2"/><rect x="810.48" y="230.0" width="1.3" height="5.2"/><rect x="821.41" y="228.0" width="2.0" height="7.2"/><rect x="833.05" y="230.0" width="1.3" height="5.2"/><rect x="844.33" y="230.0" width="1.3" height="5.2"/><rect x="855.62" y="230.0" width="1.3" height="5.2"/><rect x="866.55" y="228.0" width="2.0" height="7.2"/><rect x="878.18" y="230.0" width="1.3" height="5.2"/><rect x="889.47" y="230.0" width="1.3" height="5.2"/><rect x="900.75" y="230.0" width="1.3" height="5.2"/><rect x="911.68" y="228.0" width="2.0" height="7.2"/><rect x="923.32" y="230.0" width="1.3" height="5.2"/><rect x="934.60" y="230.0" width="1.3" height="5.2"/><rect x="945.89" y="230.0" width="1.3" height="5.2"/><rect x="956.82" y="228.0" width="2.0" height="7.2"/><rect x="968.45" y="230.0" width="1.3" height="5.2"/><rect x="979.74" y="230.0" width="1.3" height="5.2"/><rect x="991.02" y="230.0" width="1.3" height="5.2"/><rect x="1001.95" y="228.0" width="2.0" height="7.2"/><rect x="1013.59" y="230.0" width="1.3" height="5.2"/><rect x="1024.87" y="230.0" width="1.3" height="5.2"/><rect x="1036.16" y="230.0" width="1.3" height="5.2"/><rect x="1047.09" y="228.0" width="2.0" height="7.2"/><rect x="1058.72" y="230.0" width="1.3" height="5.2"/><rect x="1070.01" y="230.0" width="1.3" height="5.2"/><rect x="1081.29" y="230.0" width="1.3" height="5.2"/><rect x="1092.22" y="228.0" width="2.0" height="7.2"/><rect x="1103.86" y="230.0" width="1.3" height="5.2"/><rect x="382.5" y="240.71" width="5.5" height="1.3"/><rect x="382.5" y="251.98" width="5.5" height="1.3"/><rect x="380.8" y="262.90" width="7.2" height="2.0"/><rect x="382.5" y="274.52" width="5.5" height="1.3"/><rect x="382.5" y="285.79" width="5.5" height="1.3"/><rect x="382.5" y="297.06" width="5.5" height="1.3"/><rect x="380.8" y="307.97" width="7.2" height="2.0"/><rect x="382.5" y="319.59" width="5.5" height="1.3"/><rect x="382.5" y="330.86" width="5.5" height="1.3"/><rect x="382.5" y="342.13" width="5.5" height="1.3"/><rect x="380.8" y="353.05" width="7.2" height="2.0"/><rect x="382.5" y="364.67" width="5.5" height="1.3"/><rect x="382.5" y="375.94" width="5.5" height="1.3"/><rect x="382.5" y="387.21" width="5.5" height="1.3"/><rect x="380.8" y="398.12" width="7.2" height="2.0"/><rect x="382.5" y="409.74" width="5.5" height="1.3"/><rect x="382.5" y="421.01" width="5.5" height="1.3"/><rect x="382.5" y="432.28" width="5.5" height="1.3"/><rect x="380.8" y="443.20" width="7.2" height="2.0"/><rect x="382.5" y="454.82" width="5.5" height="1.3"/><rect x="382.5" y="466.09" width="5.5" height="1.3"/><rect x="382.5" y="477.36" width="5.5" height="1.3"/><rect x="380.8" y="488.27" width="7.2" height="2.0"/><rect x="382.5" y="499.89" width="5.5" height="1.3"/><rect x="382.5" y="511.16" width="5.5" height="1.3"/><rect x="382.5" y="522.43" width="5.5" height="1.3"/><rect x="380.8" y="533.35" width="7.2" height="2.0"/><rect x="382.5" y="544.97" width="5.5" height="1.3"/><rect x="382.5" y="556.24" width="5.5" height="1.3"/><rect x="382.5" y="567.51" width="5.5" height="1.3"/><rect x="380.8" y="578.42" width="7.2" height="2.0"/><rect x="382.5" y="590.04" width="5.5" height="1.3"/><rect x="382.5" y="601.31" width="5.5" height="1.3"/><rect x="382.5" y="612.58" width="5.5" height="1.3"/><rect x="380.8" y="623.50" width="7.2" height="2.0"/><rect x="382.5" y="635.12" width="5.5" height="1.3"/><rect x="382.5" y="646.39" width="5.5" height="1.3"/><rect x="382.5" y="657.66" width="5.5" height="1.3"/><rect x="380.8" y="668.58" width="7.2" height="2.0"/><rect x="382.5" y="680.19" width="5.5" height="1.3"/><rect x="382.5" y="691.46" width="5.5" height="1.3"/><rect x="382.5" y="702.73" width="5.5" height="1.3"/><rect x="380.8" y="713.65" width="7.2" height="2.0"/><rect x="382.5" y="725.27" width="5.5" height="1.3"/><rect x="382.5" y="736.54" width="5.5" height="1.3"/></g><g fill="#fff" stroke="#fff" stroke-width="0.4" font-size="17.5" font-family="Liberation Sans"><text x="506.5" y="224.5" text-anchor="middle">1</text><text x="596.7" y="224.5" text-anchor="middle">2</text><text x="687.0" y="224.5" text-anchor="middle">3</text><text x="777.3" y="224.5" text-anchor="middle">4</text><text x="867.5" y="224.5" text-anchor="middle">5</text><text x="957.8" y="224.5" text-anchor="middle">6</text><text x="1048.1" y="224.5" text-anchor="middle">7</text><text transform="translate(377.2 354.0) rotate(-90)" text-anchor="middle">1</text><text transform="translate(377.2 444.2) rotate(-90)" text-anchor="middle">2</text><text transform="translate(377.2 534.4) rotate(-90)" text-anchor="middle">3</text><text transform="translate(377.2 624.5) rotate(-90)" text-anchor="middle">4</text><text transform="translate(377.2 714.6) rotate(-90)" text-anchor="middle">5</text></g><g fill="#c4c4c4"><rect x="433.47" y="256.5" width="1" height="3.5"/><rect x="451.24" y="253.0" width="1" height="7.0"/><rect x="469.01" y="256.5" width="1" height="3.5"/><rect x="486.78" y="253.0" width="1" height="7.0"/><rect x="504.55" y="256.5" width="1" height="3.5"/><rect x="522.32" y="253.0" width="1" height="7.0"/><rect x="540.09" y="256.5" width="1" height="3.5"/><rect x="557.86" y="253.0" width="1" height="7.0"/><rect x="575.63" y="256.5" width="1" height="3.5"/><rect x="593.40" y="253.0" width="1" height="7.0"/><rect x="611.17" y="256.5" width="1" height="3.5"/><rect x="628.94" y="253.0" width="1" height="7.0"/><rect x="646.71" y="256.5" width="1" height="3.5"/><rect x="664.48" y="253.0" width="1" height="7.0"/><rect x="682.25" y="256.5" width="1" height="3.5"/><rect x="700.01" y="253.0" width="1" height="7.0"/><rect x="717.78" y="256.5" width="1" height="3.5"/><rect x="735.55" y="253.0" width="1" height="7.0"/><rect x="753.32" y="256.5" width="1" height="3.5"/><rect x="771.09" y="253.0" width="1" height="7.0"/><rect x="788.86" y="256.5" width="1" height="3.5"/><rect x="806.63" y="253.0" width="1" height="7.0"/><rect x="824.40" y="256.5" width="1" height="3.5"/><rect x="842.17" y="253.0" width="1" height="7.0"/><rect x="859.94" y="256.5" width="1" height="3.5"/><rect x="877.71" y="253.0" width="1" height="7.0"/><rect x="895.48" y="256.5" width="1" height="3.5"/><rect x="913.25" y="253.0" width="1" height="7.0"/><rect x="931.02" y="256.5" width="1" height="3.5"/><rect x="948.79" y="253.0" width="1" height="7.0"/><rect x="966.56" y="256.5" width="1" height="3.5"/><rect x="984.33" y="253.0" width="1" height="7.0"/><rect x="1002.10" y="256.5" width="1" height="3.5"/><rect x="1019.87" y="253.0" width="1" height="7.0"/><rect x="1037.64" y="256.5" width="1" height="3.5"/><rect x="1055.41" y="253.0" width="1" height="7.0"/><rect x="1073.18" y="256.5" width="1" height="3.5"/><rect x="1090.95" y="253.0" width="1" height="7.0"/><rect x="1108.72" y="256.5" width="1" height="3.5"/><rect x="409.3" y="281.15" width="3.7" height="1"/><rect x="405.5" y="298.89" width="7.5" height="1"/><rect x="409.3" y="316.64" width="3.7" height="1"/><rect x="405.5" y="334.38" width="7.5" height="1"/><rect x="409.3" y="352.13" width="3.7" height="1"/><rect x="405.5" y="369.88" width="7.5" height="1"/><rect x="409.3" y="387.62" width="3.7" height="1"/><rect x="405.5" y="405.37" width="7.5" height="1"/><rect x="409.3" y="423.11" width="3.7" height="1"/><rect x="405.5" y="440.86" width="7.5" height="1"/><rect x="409.3" y="458.61" width="3.7" height="1"/><rect x="405.5" y="476.35" width="7.5" height="1"/><rect x="409.3" y="494.10" width="3.7" height="1"/><rect x="405.5" y="511.84" width="7.5" height="1"/><rect x="409.3" y="529.59" width="3.7" height="1"/><rect x="405.5" y="547.34" width="7.5" height="1"/><rect x="409.3" y="565.08" width="3.7" height="1"/><rect x="405.5" y="582.83" width="7.5" height="1"/><rect x="409.3" y="600.58" width="3.7" height="1"/><rect x="405.5" y="618.32" width="7.5" height="1"/><rect x="409.3" y="636.07" width="3.7" height="1"/><rect x="405.5" y="653.81" width="7.5" height="1"/><rect x="409.3" y="671.56" width="3.7" height="1"/><rect x="405.5" y="689.31" width="7.5" height="1"/><rect x="409.3" y="707.05" width="3.7" height="1"/><rect x="405.5" y="724.80" width="7.5" height="1"/><rect x="409.3" y="742.54" width="3.7" height="1"/></g><g fill="#c4c4c4" font-size="10" font-family="Liberation Sans"><text x="451.7" y="248.5" text-anchor="middle">10</text><text x="487.3" y="248.5" text-anchor="middle">20</text><text x="522.8" y="248.5" text-anchor="middle">30</text><text x="558.4" y="248.5" text-anchor="middle">40</text><text x="593.9" y="248.5" text-anchor="middle">50</text><text x="629.4" y="248.5" text-anchor="middle">60</text><text x="665.0" y="248.5" text-anchor="middle">70</text><text x="700.5" y="248.5" text-anchor="middle">80</text><text x="736.1" y="248.5" text-anchor="middle">90</text><text x="771.6" y="248.5" text-anchor="middle">100</text><text x="807.1" y="248.5" text-anchor="middle">110</text><text x="842.7" y="248.5" text-anchor="middle">120</text><text x="878.2" y="248.5" text-anchor="middle">130</text><text x="913.8" y="248.5" text-anchor="middle">140</text><text x="949.3" y="248.5" text-anchor="middle">150</text><text x="984.8" y="248.5" text-anchor="middle">160</text><text x="1020.4" y="248.5" text-anchor="middle">170</text><text x="1055.9" y="248.5" text-anchor="middle">180</text><text x="1091.4" y="248.5" text-anchor="middle">190</text><text transform="translate(401.3 299.4) rotate(-90)" text-anchor="middle">10</text><text transform="translate(401.3 334.9) rotate(-90)" text-anchor="middle">20</text><text transform="translate(401.3 370.4) rotate(-90)" text-anchor="middle">30</text><text transform="translate(401.3 405.9) rotate(-90)" text-anchor="middle">40</text><text transform="translate(401.3 441.4) rotate(-90)" text-anchor="middle">50</text><text transform="translate(401.3 476.9) rotate(-90)" text-anchor="middle">60</text><text transform="translate(401.3 512.3) rotate(-90)" text-anchor="middle">70</text><text transform="translate(401.3 547.8) rotate(-90)" text-anchor="middle">80</text><text transform="translate(401.3 583.3) rotate(-90)" text-anchor="middle">90</text><text transform="translate(401.3 618.8) rotate(-90)" text-anchor="middle">100</text><text transform="translate(401.3 654.3) rotate(-90)" text-anchor="middle">110</text><text transform="translate(401.3 689.8) rotate(-90)" text-anchor="middle">120</text><text transform="translate(401.3 725.3) rotate(-90)" text-anchor="middle">130</text></g><g stroke="#c6c6c6" stroke-width="2"><line x1="506.5" y1="270.5" x2="506.5" y2="744" stroke-dasharray="2 13.0"/><line x1="596.7" y1="270.5" x2="596.7" y2="744" stroke-dasharray="2 13.0"/><line x1="687.0" y1="270.5" x2="687.0" y2="744" stroke-dasharray="2 13.0"/><line x1="777.3" y1="270.5" x2="777.3" y2="744" stroke-dasharray="2 13.0"/><line x1="867.5" y1="270.5" x2="867.5" y2="744" stroke-dasharray="2 13.0"/><line x1="957.8" y1="274.2" x2="957.8" y2="744" stroke-dasharray="2 5.5"/><line x1="1048.1" y1="270.5" x2="1048.1" y2="744" stroke-dasharray="2 13.0"/><line x1="424" y1="354.0" x2="1115" y2="354.0" stroke-dasharray="2 13"/><line x1="424" y1="444.2" x2="1115" y2="444.2" stroke-dasharray="2 13"/><line x1="424" y1="534.4" x2="1115" y2="534.4" stroke-dasharray="2 13"/><line x1="424" y1="624.5" x2="1115" y2="624.5" stroke-dasharray="2 13"/><line x1="424" y1="714.6" x2="1115" y2="714.6" stroke-dasharray="2 13"/></g><line x1="427" y1="274.5" x2="1115" y2="274.5" stroke="#ff2020" stroke-width="1.2" stroke-dasharray="4 3"/><line x1="427" y1="274.5" x2="427" y2="744" stroke="#ff5266" stroke-width="1.7" stroke-dasharray="3 2.4"/><path d="M703 440.3 C703 440.3 719.6 371.4 794.4 371.4 C845.1 371.4 881 419.2 881 462 C881 553.6 759.5 668.1 703 727.5 C646.5 668.1 525 553.6 525 462 C525 419.2 560.9 371.4 611.6 371.4 C686.4 371.4 703 440.3 703 440.3 Z" fill="none" stroke="#000" stroke-width="2" stroke-linejoin="miter"/><rect x="523.5" y="369.5" width="359" height="359" fill="none" stroke="#3030e0" stroke-width="1" stroke-dasharray="4 4"/><g fill="#2020d0"><circle cx="523.5" cy="369.5" r="3.7"/><circle cx="703.0" cy="369.5" r="3.7"/><circle cx="882.5" cy="369.5" r="3.7"/><circle cx="523.5" cy="549.0" r="3.7"/><circle cx="882.5" cy="549.0" r="3.7"/><circle cx="523.5" cy="728.5" r="3.7"/><circle cx="703.0" cy="728.5" r="3.7"/><circle cx="882.5" cy="728.5" r="3.7"/></g></svg>
<svg style="left:0;top:0" width="300" height="744" viewBox="0 0 300 744">
<!-- download icon in button -->
<g fill="#fff">
<rect x="59.8" y="153.6" width="10.2" height="11.4"/>
<polygon points="55.2,164.4 74.6,164.4 64.9,176.2"/>
</g>
<path d="M48.6 174.2 L51.4 180 H79.2 L82 174.2" fill="none" stroke="#fff" stroke-width="1.6"/>
<!-- reset arrow -->
<path d="M227 222.2 H239.8 A6.6 6.6 0 0 1 239.8 235.4 H223.6" fill="none" stroke="#393657" stroke-width="2.6"/>
<polygon points="220.4,222.2 228.8,217.2 228.8,227.2" fill="#393657"/>
<!-- grid outer border -->
<path d="M3.5 744 V244.5 H255.5 V744" fill="none" stroke="#b4b4bc" stroke-width="1"/>
<!-- scrollbar -->
<rect x="239" y="245" width="16" height="499" fill="#efefef"/>
<rect x="239" y="245" width="16" height="17" fill="#f1f1f1"/>
<rect x="239" y="262" width="16" height="374" fill="#cdcdcd"/>
<path d="M243.8 256.4 L247 253.2 L250.2 256.4" fill="none" stroke="#505050" stroke-width="1.6"/>
</svg>
<!-- collapse tab -->
<div class="a" style="left:256px;top:447px;width:30px;height:55px;box-sizing:border-box;background:#fff;border:1px solid #bbb;border-left:none;border-radius:0 2px 2px 0;box-shadow:1px 1px 2px rgba(0,0,0,0.18);"></div>
<svg style="left:0;top:0" width="300" height="744" viewBox="0 0 300 744"><path d="M278.2 462.6 L267.8 474.2 L278.2 485.6" fill="none" stroke="#393657" stroke-width="2"/></svg>


<div class="a" style="left:337px;top:55px;width:393px;height:366px;box-sizing:border-box;background:#fff;border:1px solid #a6a6a6;border-radius:0 0 0 2px;box-shadow:0 1px 1px rgba(0,0,0,0.06);"></div>
<div class="a" style="left:338px;top:55px;width:89px;height:1px;background:#a0a0a0;"></div>
<div class="grp" style="left:364px;top:79px;width:120px;height:53px;"><span>Rückgängig</span></div>
<div class="grp" style="left:497px;top:79px;width:206px;height:53px;"><span>Schneiden/Kopieren/Einfügen</span></div>
<div class="grp" style="left:364px;top:147px;width:120px;height:53px;"><span>Gruppieren</span></div>
<div class="grp" style="left:497px;top:147px;width:206px;height:53px;"><span>Bearbeiten</span></div>
<div class="grp" style="left:365px;top:215px;width:338px;height:53px;"><span style="color:#b9bdc6">Ausrichten</span></div>
<div class="grp" style="left:365px;top:283px;width:119px;height:53px;"><span>Spiegeln</span></div>
<div class="grp" style="left:497px;top:283px;width:206px;height:53px;"><span>Reihenfolge</span></div>
<div class="grp" style="left:365px;top:351px;width:338px;height:53px;"><span>Prozess-Überlappung</span></div>

<svg style="left:0;top:0" width="1115" height="744" viewBox="0 0 1115 744">
<!-- undo / redo -->
<g fill="#393657">
<polygon points="381.8,107.2 399.4,107.2 390.4,116.8"/>
<path d="M387.6 107.4 C387.6 101.2 392 96.8 398.2 96.8 C403.8 96.8 408.2 101.8 408 110.2 C406.4 104.8 402.6 100.9 398.5 100.9 C395.6 100.9 393.6 103.6 393.6 107.4 Z"/>
</g>
<g fill="#c9cdd6">
<polygon points="453.2,107.2 435.6,107.2 444.6,116.8"/>
<path d="M447.4 107.4 C447.4 101.2 443 96.8 436.8 96.8 C431.2 96.8 426.8 101.8 427 110.2 C428.6 104.8 432.4 100.9 436.5 100.9 C439.4 100.9 441.4 103.6 441.4 107.4 Z"/>
</g>
<!-- scissors -->
<g fill="#393657">
<polygon points="520.2,93.6 522.6,95 529.8,107.4 531.6,110.6 529,111 525.4,107.6"/>
<polygon points="534.6,93.6 532.2,95 525,107.4 523.2,110.6 525.8,111 529.4,107.6"/>
</g>
<g fill="none" stroke="#393657" stroke-width="1.6" stroke-linecap="round">
<ellipse cx="521.3" cy="112.9" rx="3.9" ry="3.4" stroke-width="1.4"/>
<ellipse cx="533.5" cy="112.9" rx="3.9" ry="3.4" stroke-width="1.4"/>
<path d="M518.4 115.4 Q516.4 117.6 514.6 118.6 M536.4 115.4 Q538.4 117.6 540.2 118.6" stroke-width="2"/>
</g>
<!-- copy -->
<rect x="570.8" y="104.8" width="14" height="14.2" fill="#fff" stroke="#a600e2" stroke-width="1.4"/>
<rect x="559.6" y="94" width="15.6" height="16.2" rx="1.6" fill="#a400e0"/>
<!-- paste (disabled) -->
<path fill="#cdd1da" fill-rule="evenodd" d="M606.6 100.4 H628.8 V119.6 H606.6 Z M609.2 103 V116.2 H626.2 V103 Z"/>
<rect x="611.9" y="99.6" width="11" height="5.6" fill="#fff" stroke="#cdd1da" stroke-width="1.6"/>
<path d="M615.2 99.6 V96.6 Q617.4 94 619.6 96.6 V99.6" fill="#fff" stroke="#cdd1da" stroke-width="1.6"/>
<!-- duplicate -->
<path d="M660.9 109 V118.9 H675.1 V106.5" fill="none" stroke="#393657" stroke-width="1.6"/>
<rect x="650" y="94" width="15.8" height="16.2" rx="1.6" fill="#393657"/>
<path d="M666 95.4 Q671.6 96.4 672.4 104" fill="none" stroke="#393657" stroke-width="1.8"/>
<polygon points="668,103.2 676.6,103.2 672.4,109.6" fill="#393657"/>
<!-- group (disabled) -->
<g fill="none" stroke="#ccd0d8" stroke-width="1.3">
<rect x="384.8" y="165.6" width="20.9" height="20.9"/>
<rect x="392.8" y="177.6" width="8.8" height="4.4" rx="0.8"/>
<rect x="428.8" y="164.8" width="22.8" height="22.8" stroke-width="1.7" stroke-dasharray="3.2 2.6"/>
<rect x="438.6" y="177.6" width="8.6" height="4.4" rx="0.8"/>
</g>
<g fill="#ccd0d8">
<circle cx="384.8" cy="165.6" r="2.3"/><circle cx="395.2" cy="165.6" r="2.3"/><circle cx="405.7" cy="165.6" r="2.3"/>
<circle cx="384.8" cy="176" r="2.3"/><circle cx="405.7" cy="176" r="2.3"/>
<circle cx="384.8" cy="186.5" r="2.3"/><circle cx="395.2" cy="186.5" r="2.3"/><circle cx="405.7" cy="186.5" r="2.3"/>
<rect x="388.3" y="170.2" width="9.4" height="4.7" rx="1.6"/>
<rect x="433.6" y="170.2" width="9.4" height="4.7" rx="1.6"/>
</g>
<!-- select -->
<rect x="516.2" y="162.8" width="21.6" height="21.6" fill="none" stroke="#393657" stroke-width="1.7" stroke-dasharray="3.2 2.4"/>
<g fill="#393657">
<circle cx="522.9" cy="169.6" r="4"/>
<polygon points="524,181 534.8,181 529.4,171.4"/>
<polygon points="534.6,181.2 545.2,184.6 540.8,186.4 546,191.4 544.2,193 539.2,188 537.4,192.2"/>
</g>
<g fill="#fff"><rect x="533.4" y="181.2" width="0" height="0"/></g>
<!-- trash -->
<g fill="none" stroke="#393657" stroke-width="1.7">
<path d="M559.2 167.8 H586"/>
<path d="M567.6 167.4 V164 Q567.6 163.2 568.4 163.2 H576.8 Q577.6 163.2 577.6 164 V167.4"/>
<path d="M562.4 168.6 L565 187.4 Q565.2 188.8 566.6 188.8 H578.4 Q579.8 188.8 580 187.4 L582.6 168.6"/>
<path d="M568.6 172 L569.2 185.4 M572.5 172 V185.4 M576.4 172 L575.8 185.4"/>
</g>
<!-- text (disabled) -->
<path d="M630.8 163.4 H605.4 V188.2 H630.8" fill="none" stroke="#cdd1da" stroke-width="1.8"/>
<text x="618.3" y="185.4" text-anchor="middle" font-family="Liberation Serif" font-weight="bold" font-size="24.5" fill="#cdd1da">T</text>
<!-- weld -->
<g fill="none" stroke="#393657" stroke-width="1.7">
<circle cx="662.4" cy="178" r="10.2"/>
<circle cx="662.6" cy="178.4" r="3"/>
<path d="M666 159.4 V167.2 M673.6 159.4 V167.2 M666 163.6 H673.6 M665.8 172.4 V181" stroke-width="1.5"/>
</g>
<!-- align (disabled) -->
<g fill="#cbd0d8">
<rect x="382.2" y="231" width="2" height="26"/>
<rect x="386.8" y="247.2" width="21" height="7.6"/>
<rect x="429.9" y="247.2" width="21.5" height="7.6"/>
<rect x="473" y="247.2" width="21" height="7.6"/>
<rect x="496.6" y="231" width="2" height="26"/>
<rect x="518.2" y="231.2" width="25.6" height="2.2"/>
<rect x="534.3" y="236.2" width="7.4" height="20.5"/>
<rect x="565.4" y="233.7" width="7.6" height="20.9"/>
<rect x="608.2" y="255" width="26" height="2.2"/>
<rect x="624.5" y="231.1" width="7.7" height="21.4"/>
</g>
<g fill="#fff" stroke="#cbd0d8" stroke-width="1.6">
<path d="M440.6 230.6 V257.6" fill="none"/>
<path d="M563 243.8 H589.4" fill="none"/>
<rect x="387.6" y="234.1" width="9.8" height="9.9" rx="1.2"/>
<rect x="435.8" y="234.1" width="9.8" height="9.9" rx="1.2"/>
<rect x="483.8" y="234.1" width="9.8" height="9.9" rx="1.2"/>
<rect x="521.1" y="237" width="9.8" height="9.9" rx="1.2"/>
<rect x="576.7" y="239.8" width="10" height="9.4" rx="1.2"/>
<rect x="611.3" y="242.4" width="9.8" height="9.4" rx="1.2"/>
</g>
<!-- flip -->
<g fill="#393657">
<rect x="382" y="311" width="26" height="2"/>
<polygon points="386.6,308.8 403.8,308.8 403.8,299"/>
<polygon points="386.6,315.4 403.8,315.4 403.8,324.8"/>
<rect x="439.4" y="299" width="2" height="26"/>
<polygon points="427.4,320.4 437,320.4 437,303.8"/>
<polygon points="444,303.8 444,320.4 453.4,320.4"/>
</g>
<!-- layers -->
<g stroke="#393657" stroke-width="1.6" stroke-linejoin="round">
<polygon points="517.2,318 527.4,311.6 537.6,318 527.4,324.4" fill="#fff"/>
<polygon points="517.2,311.5 527.4,305.1 537.6,311.5 527.4,317.9" fill="#fff"/>
<polygon points="517.2,306 527.4,299.6 537.6,306 527.4,312.4" fill="#393657"/>
<polygon points="559.2,315 569.4,308.6 579.6,315 569.4,321.4" fill="#fff"/>
<polygon points="559.2,309.2 569.4,302.8 579.6,309.2 569.4,315.6" fill="#393657"/>
<polygon points="604.6,315 614.8,308.6 625,315 614.8,321.4" fill="#393657"/>
<polygon points="604.6,309.2 614.8,302.8 625,309.2 614.8,315.6" fill="#fff"/>
<polygon points="653,318 663.2,311.6 673.4,318 663.2,324.4" fill="#393657"/>
<polygon points="653,311.5 663.2,305.1 673.4,311.5 663.2,317.9" fill="#fff"/>
<polygon points="653,306 663.2,299.6 673.4,306 663.2,312.4" fill="#fff"/>
</g>
<g fill="none" stroke="#393657" stroke-width="1.7">
<path d="M577.8 319.6 Q582.6 318 583.8 313"/>
<path d="M623.4 305.2 Q627.8 306.6 628.4 311.4"/>
</g>
<g fill="#393657">
<polygon points="580.6,313.6 587.2,313.6 583.8,309.4"/>
<polygon points="625.2,311 631.6,311 628.4,315.4"/>
</g>
<!-- process overlap -->
<g fill="none" stroke="#393657" stroke-width="3">
<circle cx="390.8" cy="384.6" r="8.2"/>
<polygon points="395,367.4 408.2,380.2 390,385"/>
</g>
<g fill="#fff">
<circle cx="390.8" cy="384.6" r="8.2"/>
<polygon points="395,367.4 408.2,380.2 390,385"/>
</g>
<g fill="none" stroke="#393657" stroke-width="1.5">
<circle cx="436" cy="384.6" r="8.2"/>
<polygon points="440.4,367.4 453.4,380.2 436.2,384.4"/>
<polygon points="485.6,367.4 498.6,380.2 481.4,384.4"/>
<circle cx="481.2" cy="384.6" r="8.2" fill="#fff"/>
<polygon points="530.8,367.4 543.8,380.2 526.6,384.4" />
<circle cx="526.4" cy="384.6" r="8.2" stroke-dasharray="3.2 1.6"/>
</g>
</svg>

<div class="a" style="left:568px;top:123px;width:103px;height:22px;box-sizing:border-box;background:#fff;border:1px solid #777;font-size:12px;line-height:19px;color:#111;padding-left:7px;padding-top:2px;white-space:nowrap;">Kopieren (ctrl+c)</div>

</body></html>
